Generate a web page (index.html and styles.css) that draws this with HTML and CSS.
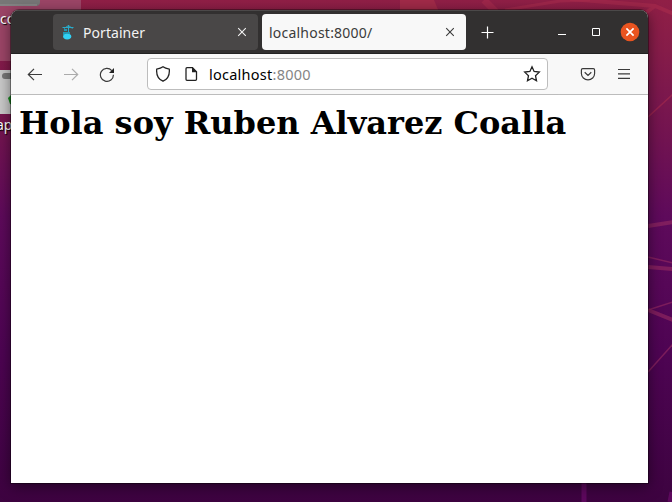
FILE: index.html
```html
<!DOCTYPE html>
<html lang="es">
<head>
<meta charset="utf-8">
<title>localhost:8000/</title>
<link rel="stylesheet" href="styles.css">
</head>
<body>
<div class="desktop">
  <svg class="wallpaper" width="672" height="502" viewBox="0 0 672 502">
    <defs>
      <linearGradient id="sky" x1="0" y1="0" x2="0" y2="1">
        <stop offset="0" stop-color="#901f46"/>
        <stop offset=".1" stop-color="#861c49"/>
        <stop offset=".28" stop-color="#711351"/>
        <stop offset=".43" stop-color="#5e0a5b"/>
        <stop offset=".7" stop-color="#4e0453"/>
        <stop offset="1" stop-color="#3d0340"/>
      </linearGradient>
    </defs>
    <rect width="672" height="502" fill="url(#sky)"/>
    <path d="M400 0h34l5 12h-39z" fill="#a12a48"/>
    <g fill="none" stroke="#a82b4c" stroke-opacity=".6">
      <path d="M484 0l12 12" stroke-width="7"/>
      <path d="M505 10L560 1L590 0" stroke-width="3"/>
      <path d="M570 -1L655 6L674 14M655 6L643 15" stroke-width="4"/>
      <path d="M648 117L673 94" stroke-width="1.5"/>
    </g>
    <g fill="none" stroke="#8e2660" stroke-opacity=".7">
      <path d="M648 226L673 222" stroke-width="4"/>
      <path d="M648 257L673 263" stroke-width="1.5"/>
      <path d="M648 267L673 269" stroke-width="4"/>
      <path d="M648 310L673 302" stroke-width="1.5"/>
      <path d="M648 310L673 320" stroke-width="4"/>
      <path d="M648 372L673 344" stroke-width="1.5"/>
      <path d="M584 482V502M672 492l-2 10" stroke="#6b0c69" stroke-width="5"/>
    </g>
    <rect width="81" height="61" fill="#9c4567"/>
    <path d="M0 0h40v2q0 4-4 4H0z" fill="#777"/>
    <path d="M0 5h37" stroke="#929292"/>
    <rect x="-5" y="70" width="34" height="44" rx="6" fill="#c9c9c9"/>
    <rect x="2" y="73" width="20" height="6" rx="3" fill="#777"/>
    <path d="M12 94l-4 4 2 6 3 1z" fill="#188a20"/>
  </svg>
  <span class="icon-label label-top">co</span>
  <span class="icon-label label-trash">ap</span>

  <main class="window">
    <header class="tabbar">
      <div class="tab">
        <svg class="favicon" width="14" height="16" viewBox="0 0 14 16">
          <path d="M1.5 3.5h11M7.5 1v11M3 4.5L7.5 1.5L11.5 4.5" fill="none" stroke="#2aa9c7" stroke-width="1"/>
          <path d="M3 5h3v2H3zM2 8h7v3H2z" fill="#2297b2"/>
          <ellipse cx="6.2" cy="12.6" rx="4.1" ry="2.8" fill="#31d1f5"/>
        </svg>
        <span class="tab-title">Portainer</span>
        <svg class="tab-close" width="10" height="10" viewBox="0 0 10 10"><path d="M1.2 1.2l7.6 7.6M8.8 1.2L1.2 8.8"/></svg>
      </div>
      <div class="tab active">
        <span class="tab-title">localhost:8000/</span>
        <svg class="tab-close" width="10" height="10" viewBox="0 0 10 10"><path d="M1.2 1.2l7.6 7.6M8.8 1.2L1.2 8.8"/></svg>
      </div>
      <svg class="new-tab" width="13" height="13" viewBox="0 0 13 13"><path d="M6.5 .5v12M.5 6.5h12"/></svg>
      <div class="controls">
        <svg width="8" height="12" viewBox="0 0 8 12"><path d="M0 8.5h8"/></svg>
        <svg width="8" height="12" viewBox="0 0 8 12"><path d="M.5 2.5h7v7h-7z"/></svg>
        <svg class="close" width="20" height="20" viewBox="0 0 20 20"><circle cx="10" cy="10" r="9.3"/><path d="M6.4 6.4l7.2 7.2M13.6 6.4l-7.2 7.2"/></svg>
      </div>
    </header>

    <nav class="toolbar">
      <div class="nav-buttons">
        <svg width="16" height="16" viewBox="0 0 16 16"><path d="M15 8.5H1.5M7 2.8L1.3 8.5L7 14.2"/></svg>
        <svg class="disabled" width="16" height="16" viewBox="0 0 16 16"><path d="M1 8.5h13.5M9 2.8l5.7 5.7L9 14.2"/></svg>
        <svg width="16" height="16" viewBox="0 0 16 16"><path d="M14.4 8.7A6.5 6.5 0 1 1 12.8 4.6"/><path class="solid" d="M15 2v5h-5z"/></svg>
      </div>
      <div class="urlbar">
        <svg width="16" height="16" viewBox="0 0 16 16"><path d="M8 .8C9.6 2 12 2.8 14.3 3.2C14.8 8.8 12.5 13.2 8 15.2C3.5 13.2 1.2 8.8 1.7 3.2C4 2.8 6.4 2 8 .8z"/></svg>
        <svg class="doc" width="14" height="16" viewBox="0 0 14 16"><path d="M3 1.7h5.5l4 4v7.6q0 1-1 1H3q-1 0-1-1V2.7q0-1 1-1z"/><path class="solid" d="M8 1l5.2 5.2H8z"/></svg>
        <span class="url"><span class="host">localhost</span>:8000</span>
        <svg class="star" width="18" height="18" viewBox="0 0 18 18"><path d="M9 1.8l2.1 4.7 5.2.6-3.8 3.6 1 5.1L9 13.3l-4.5 2.5 1-5.1L1.7 7.1l5.2-.6z"/></svg>
      </div>
      <div class="tools">
        <svg width="16" height="16" viewBox="0 0 16 16"><path d="M2.7 2.7h10.6q1.3 0 1.3 1.3v3.5a6.6 6.3 0 0 1-13.2 0V4q0-1.3 1.3-1.3zM4.7 6.3L8 9.5l3.3-3.2"/></svg>
        <svg width="12" height="12" viewBox="0 0 12 12"><path d="M0 1.5h12M0 5.9h12M0 10.3h12"/></svg>
      </div>
    </nav>

    <section class="page">
      <h1>Hola soy Ruben Alvarez Coalla</h1>
    </section>
  </main>
</div>
</body>
</html>
```
FILE: styles.css
```css
* { box-sizing: border-box; }

body {
  margin: 0;
  overflow: hidden;
}

svg { display: block; flex: none; }

.desktop {
  position: relative;
  width: 672px;
  height: 502px;
  padding: 10px 24px 19px 11px;
  overflow: hidden;
  font-family: "Noto Sans", "Open Sans", sans-serif;
}

.wallpaper {
  position: absolute;
  inset: 0;
}

.icon-label {
  position: absolute;
  color: #fff;
  font-size: 14px;
  line-height: 18px;
  text-shadow: 1px 1px 1px #000;
}

.label-top { left: 0; top: 10px; }
.label-trash { left: -4px; top: 116px; }

.window {
  position: relative;
  display: flex;
  flex-direction: column;
  width: 637px;
  height: 473px;
  background: #fff;
  border-radius: 8px 8px 0 0;
  overflow: hidden;
  box-shadow: 0 0 0 1px rgba(0, 0, 0, .35), 0 3px 14px rgba(0, 0, 0, .5);
}

.tabbar {
  display: flex;
  align-items: center;
  height: 44px;
  padding-left: 42px;
  background: #323030;
  border-top: 1px solid #4b4949;
  border-bottom: 1px solid #222;
}

.tab {
  display: flex;
  align-items: center;
  width: 205px;
  height: 36px;
  margin-right: 4px;
  padding: 0 11px 0 8px;
  border-radius: 4px;
  background: #494747;
  color: #f3f3f3;
  font-size: 14px;
}

.tab.active {
  width: 204px;
  padding-left: 7px;
  background: #f8f8f8;
  color: #3b3b3b;
}

.favicon { margin-right: 8px; }

.tab-title {
  flex: 1;
  letter-spacing: .06px;
  white-space: nowrap;
}

.active .tab-title { letter-spacing: .22px; }

.tab-close {
  fill: none;
  stroke: currentColor;
  stroke-width: 1.1;
}

.new-tab {
  margin-left: 11px;
  stroke: #fff;
  stroke-width: 1.2;
}

.controls {
  display: flex;
  align-items: center;
  margin-left: auto;
  padding-right: 8px;
  fill: none;
  stroke: #fff;
}

.controls svg + svg { margin-left: 26px; }
.controls svg + .close { margin-left: 20px; }
.close circle { fill: #e95420; stroke: none; }
.close path { stroke-width: 1.7; }

.toolbar {
  display: flex;
  align-items: center;
  height: 41px;
  background: #f8f8f8;
  border-bottom: 1px solid #bcbcbc;
  fill: none;
  stroke: #3b3b3b;
  stroke-width: 1.2;
}

.nav-buttons {
  display: flex;
  gap: 20px;
  width: 136px;
  padding-left: 16px;
}

.disabled { opacity: .4; }
.solid { fill: #222; stroke: none; }

.urlbar {
  display: flex;
  align-items: center;
  width: 401px;
  height: 32px;
  padding: 0 6px 0 7px;
  background: #fff;
  border: 1px solid #bdbdbd;
  border-radius: 4px;
  stroke: #222;
  stroke-width: 1.3;
}

.doc { margin-left: 13px; }

.url {
  margin-left: 11px;
  color: #858585;
  font-size: 14.5px;
  letter-spacing: .25px;
}

.host { color: #000; }
.star { margin-left: auto; }

.tools {
  display: flex;
  align-items: center;
  gap: 22px;
  margin-left: 32px;
}

.page {
  flex: 1;
  padding: 9px 8px 8px;
}

h1 {
  margin: 0;
  color: #000;
  font-family: "DejaVu Serif", serif;
  font-size: 32px;
  line-height: 38px;
  white-space: nowrap;
}
```
